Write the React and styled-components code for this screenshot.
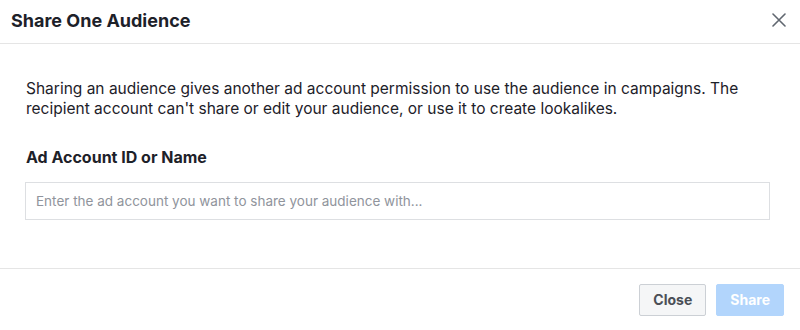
import React from 'react';
import styled, { createGlobalStyle } from 'styled-components';

const GlobalStyle = createGlobalStyle`
  html, body {
    margin: 0;
    padding: 0;
    background: #ffffff;
  }
  body {
    font-family: Inter, "Liberation Sans", Arial, sans-serif;
    color: #1d2129;
  }
`;

const Dialog = styled.div`
  width: 800px;
  height: 330px;
  display: flex;
  flex-direction: column;
  background: #ffffff;
`;

const Header = styled.div`
  height: 44px;
  box-sizing: border-box;
  display: flex;
  align-items: center;
  justify-content: space-between;
  padding: 0 13px 0 11px;
  border-bottom: 1px solid #e5e5e5;
`;

const Title = styled.h2`
  margin: 0;
  font-size: 18px;
  font-weight: 700;
  color: #1d2129;
  padding-bottom: 2px;
`;

const CloseIcon = styled.button`
  border: 0;
  background: none;
  padding: 0;
  width: 16px;
  height: 16px;
  display: flex;
  align-items: center;
  justify-content: center;
  cursor: pointer;
  margin-top: -3px;
`;

const Body = styled.div`
  flex: 1;
  padding: 35px 30px 0 25px;
  border-bottom: 1px solid #e5e5e5;
`;

const Description = styled.p`
  margin: 0 0 0 1px;
  font-size: 15.5px;
  line-height: 20px;
  color: #1d2129;
`;

const Label = styled.label`
  display: block;
  margin: 28px 0 0 1px;
  font-size: 16px;
  font-weight: 700;
  line-height: 20px;
  color: #1d2129;
`;

const Input = styled.input`
  display: block;
  box-sizing: border-box;
  width: 100%;
  height: 38px;
  margin-top: 15px;
  padding: 0 10px;
  border: 1px solid #dddfe2;
  font-family: inherit;
  font-size: 13.5px;
  color: #1d2129;
  outline: none;

  &::placeholder {
    color: #90949c;
  }
`;

const Footer = styled.div`
  height: 61px;
  display: flex;
  align-items: center;
  justify-content: flex-end;
  gap: 10px;
  padding: 0 16px 0 0;
`;

const Button = styled.button`
  height: 32px;
  box-sizing: border-box;
  padding: 0 13px;
  border-radius: 2px;
  font-family: inherit;
  font-size: 14px;
  font-weight: 700;
  border: 1px solid ${p => (p.$primary ? '#b2d5fc' : '#ccd0d5')};
  background: ${p => (p.$primary ? '#b2d5fc' : '#f5f6f7')};
  color: ${p => (p.$primary ? '#ffffff' : '#4b4f56')};
  cursor: ${p => (p.$primary ? 'default' : 'pointer')};
`;

export default function App() {
  return (
    <>
      <GlobalStyle />
      <Dialog>
        <Header>
          <Title>Share One Audience</Title>
          <CloseIcon aria-label="Close">
            <svg width="14" height="14" viewBox="0 0 14 14">
              <path d="M1 1L13 13M13 1L1 13" stroke="#606770" strokeWidth="1.6" strokeLinecap="round" />
            </svg>
          </CloseIcon>
        </Header>
        <Body>
          <Description>
            Sharing an audience gives another ad account permission to use the audience in campaigns. The
            recipient account can't share or edit your audience, or use it to create lookalikes.
          </Description>
          <Label htmlFor="acct">Ad Account ID or Name</Label>
          <Input id="acct" placeholder="Enter the ad account you want to share your audience with..." />
        </Body>
        <Footer>
          <Button>Close</Button>
          <Button $primary disabled>Share</Button>
        </Footer>
      </Dialog>
    </>
  );
}
